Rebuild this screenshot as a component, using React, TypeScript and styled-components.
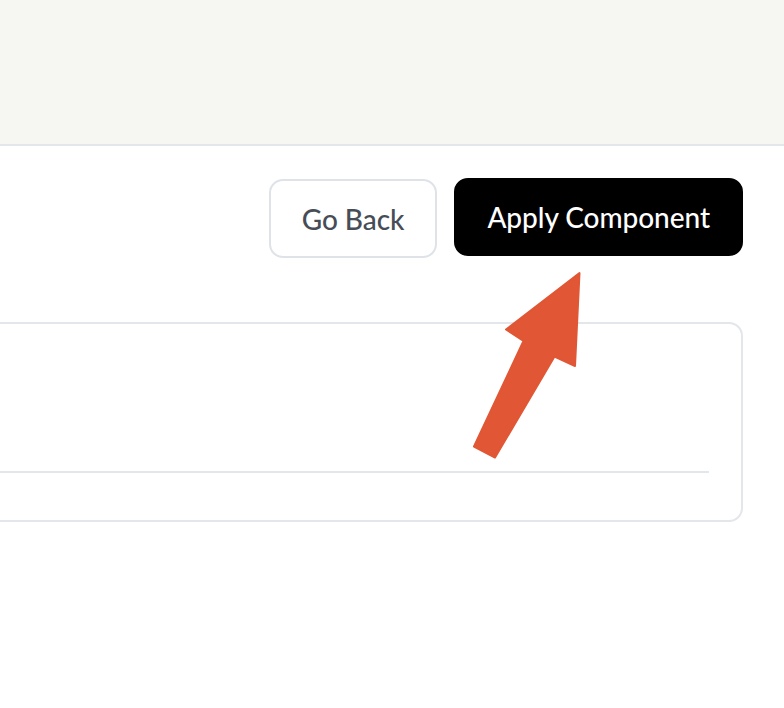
import styled, { createGlobalStyle } from 'styled-components'

const GlobalStyle = createGlobalStyle`
  html, body {
    margin: 0;
    padding: 0;
    background: #ffffff;
    font-family: Lato, 'Liberation Sans', sans-serif;
    overflow: hidden;
  }
`

const Page = styled.div`
  position: relative;
  width: 784px;
  height: 708px;
  background: #ffffff;
`

const Header = styled.header`
  height: 144px;
  background: #f6f6f2;
  border-bottom: 2px solid #e3e6ea;
`

const Content = styled.main`
  display: flex;
  flex-direction: column;
  padding: 32px 41px 0 0;
`

const Actions = styled.div`
  display: flex;
  justify-content: flex-end;
  align-items: flex-start;
  gap: 17px;
`

const Button = styled.button<{ $primary?: boolean }>`
  height: ${(p) => (p.$primary ? '78px' : '79px')};
  margin-top: ${(p) => (p.$primary ? '0' : '1px')};
  padding: 0 31px;
  border-radius: 14px;
  border: 2px solid ${(p) => (p.$primary ? '#000000' : '#dfe3e8')};
  background: ${(p) => (p.$primary ? '#000000' : '#ffffff')};
  color: ${(p) => (p.$primary ? '#ffffff' : '#474d56')};
  font-family: Lato, 'Liberation Sans', sans-serif;
  font-size: 28px;
  font-weight: 500;
  letter-spacing: -0.05px;
  cursor: pointer;
`

const Card = styled.section`
  margin-top: 64px;
  margin-left: -40px;
  height: 200px;
  box-sizing: border-box;
  border: 2px solid #e3e6ea;
  border-radius: 14px;
  display: flex;
  flex-direction: column;
  padding: 0 32px 0 0;
`

const Divider = styled.hr`
  margin: 147px 0 0 0;
  border: none;
  height: 2px;
  background: #e3e6ea;
`

const Arrow = styled.svg`
  position: absolute;
  left: 0;
  top: 0;
  pointer-events: none;
`

export default function App() {
  return (
    <Page>
      <GlobalStyle />
      <Header />
      <Content>
        <Actions>
          <Button>Go Back</Button>
          <Button $primary>Apply Component</Button>
        </Actions>
        <Card>
          <Divider />
        </Card>
      </Content>
      <Arrow width="784" height="708" viewBox="0 0 784 708">
        <polygon
          points="579.5,273 575,366 554.5,356.5 495,457.5 474,446.5 523.5,341 506,329.5"
          fill="#e15634"
          stroke="#e15634"
          strokeWidth="2"
          strokeLinejoin="round"
        />
      </Arrow>
    </Page>
  )
}
